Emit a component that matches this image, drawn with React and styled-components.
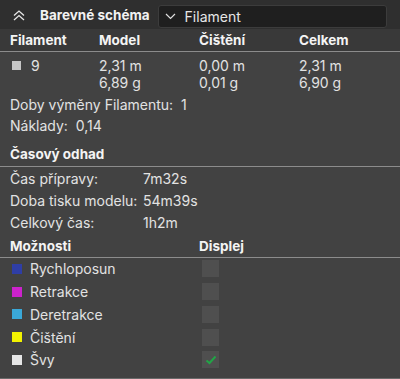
import React from "react";
import styled, { createGlobalStyle } from "styled-components";

const Global = createGlobalStyle`
  html, body { margin: 0; padding: 0; background: #424242; }
  body { font-family: Inter, "Noto Sans", sans-serif; }
`;

const Panel = styled.div`
  width: 400px;
  height: 379px;
  background: #424242;
  color: #e2e2e2;
  font-size: 14px;
  box-sizing: border-box;
  border-bottom: 1px solid #6a6a6a;
  overflow: hidden;
`;

const TopBar = styled.div`
  height: 29px;
  background: #2f2f2f;
  display: flex;
  align-items: center;
  padding: 0 13px 0 12px;
`;

const CollapseIcon = styled.svg`
  width: 14px;
  height: 12px;
  margin-right: 14px;
  flex: none;
`;

const Title = styled.div`
  font-weight: 700;
  font-size: 13.5px;
  color: #f2f2f2;
  white-space: nowrap;
  margin-right: 8px;
`;

const Select = styled.div`
  flex: 1;
  height: 23px;
  margin-top: 4px;
  background: #1f1f1f;
  border: 1px solid #3c3c3c;
  border-radius: 3px;
  display: flex;
  align-items: center;
  padding-left: 6px;
  box-sizing: border-box;
  color: #e6e6e6;
  font-size: 14px;
`;

const SelectChevron = styled.svg`
  width: 11px;
  height: 7px;
  margin-right: 9px;
`;

const Grid = styled.div`
  display: grid;
  grid-template-columns: 89px 100px 100px 1fr;
  padding-left: 10px;
`;

const HeadRow = styled(Grid)`
  height: 22px;
  align-items: center;
  background: ${(p) => p.$bg || "transparent"};
  border-bottom: 1px solid #8c8c8c;
`;

const HeadCell = styled.div`
  font-weight: 700;
  font-size: 13.5px;
  color: #f4f4f4;
  white-space: nowrap;
`;

const DataRow = styled(Grid)`
  padding-top: 5px;
  line-height: 17px;
`;

const Cell = styled.div`
  white-space: nowrap;
`;

const FilCell = styled.div`
  display: flex;
  align-items: flex-start;
  gap: 10px;
  padding-left: 2px;
`;

const Swatch = styled.span`
  display: inline-block;
  width: ${(p) => p.$size || 9}px;
  height: ${(p) => p.$size || 9}px;
  background: ${(p) => p.$color};
  flex: none;
`;

const SwatchWrap = styled.span`
  height: 17px;
  display: flex;
  align-items: center;
`;

const InfoLine = styled.div`
  padding-left: 10px;
  height: 21px;
  line-height: 21px;
  white-space: pre;
  margin-top: ${(p) => p.$mt || 0}px;
`;

const SectionTitle = styled.div`
  margin-top: ${(p) => p.$mt || 0}px;
  padding-left: 10px;
  height: 24px;
  line-height: 24px;
  font-weight: 700;
  font-size: 13.5px;
  color: #f4f4f4;
  border-bottom: 1px solid #8c8c8c;
`;

const TimeGrid = styled.div`
  display: grid;
  grid-template-columns: 133px 1fr;
  padding-left: 10px;
  grid-auto-rows: 22.2px;
  align-items: center;
`;

const OptionsHead = styled(HeadRow)`
  height: 22px;
  margin-top: 1px;
`;

const OptionList = styled.div`
  padding-top: 0;
`;

const OptionRow = styled(Grid)`
  height: 22.75px;
  align-items: center;
`;

const OptionLabel = styled.div`
  grid-column: span 2;
  display: flex;
  align-items: center;
  gap: 8px;
  padding-left: 2px;
`;

const Check = styled.div`
  width: 17px;
  height: 17px;
  margin-left: 3px;
  background: #4f4f4f;
  display: flex;
  align-items: center;
  justify-content: center;
`;

const options = [
  { label: "Rychloposun", color: "#2f3ea6", checked: false },
  { label: "Retrakce", color: "#cc22cc", checked: false },
  { label: "Deretrakce", color: "#3aa8d8", checked: false },
  { label: "Čištění", color: "#f2f200", checked: false },
  { label: "Švy", color: "#e6e6e6", checked: true },
];

const times = [
  ["Čas přípravy:", "7m32s"],
  ["Doba tisku modelu:", "54m39s"],
  ["Celkový čas:", "1h2m"],
];

export default function App() {
  return (
    <Panel>
      <Global />
      <TopBar>
        <CollapseIcon viewBox="0 0 14 12">
          <path d="M2 6.5 L7 2 L12 6.5 M2 11 L7 6.5 L12 11" fill="none" stroke="#e6e6e6" strokeWidth="1.3" />
        </CollapseIcon>
        <Title>Barevné schéma</Title>
        <Select>
          <SelectChevron viewBox="0 0 11 7">
            <path d="M1 1 L5.5 5.5 L10 1" fill="none" stroke="#e0e0e0" strokeWidth="1.2" />
          </SelectChevron>
          Filament
        </Select>
      </TopBar>

      <HeadRow $bg="#393939">
        <HeadCell>Filament</HeadCell>
        <HeadCell>Model</HeadCell>
        <HeadCell>Čištění</HeadCell>
        <HeadCell>Celkem</HeadCell>
      </HeadRow>

      <DataRow>
        <FilCell>
          <SwatchWrap><Swatch $color="#c6c6c6" /></SwatchWrap>
          <span>9</span>
        </FilCell>
        <Cell>2,31 m<br />6,89 g</Cell>
        <Cell>0,00 m<br />0,01 g</Cell>
        <Cell>2,31 m<br />6,90 g</Cell>
      </DataRow>

      <InfoLine $mt={3}>Doby výměny Filamentu:  1</InfoLine>
      <InfoLine>Náklady:  0,14</InfoLine>

      <SectionTitle $mt={6}>Časový odhad</SectionTitle>
      <TimeGrid>
        {times.map(([k, v]) => (
          <React.Fragment key={k}>
            <Cell>{k}</Cell>
            <Cell>{v}</Cell>
          </React.Fragment>
        ))}
      </TimeGrid>

      <OptionsHead>
        <HeadCell>Možnosti</HeadCell>
        <span />
        <HeadCell>Displej</HeadCell>
        <span />
      </OptionsHead>

      <OptionList>
        {options.map((o) => (
          <OptionRow key={o.label}>
            <OptionLabel>
              <Swatch $color={o.color} $size={10} />
              <span>{o.label}</span>
            </OptionLabel>
            <Check>
              {o.checked && (
                <svg width="12" height="10" viewBox="0 0 12 10">
                  <path d="M1.5 5.5 L4.5 8 L10.5 1.5" fill="none" stroke="#22a447" strokeWidth="2" />
                </svg>
              )}
            </Check>
            <span />
          </OptionRow>
        ))}
      </OptionList>
    </Panel>
  );
}
